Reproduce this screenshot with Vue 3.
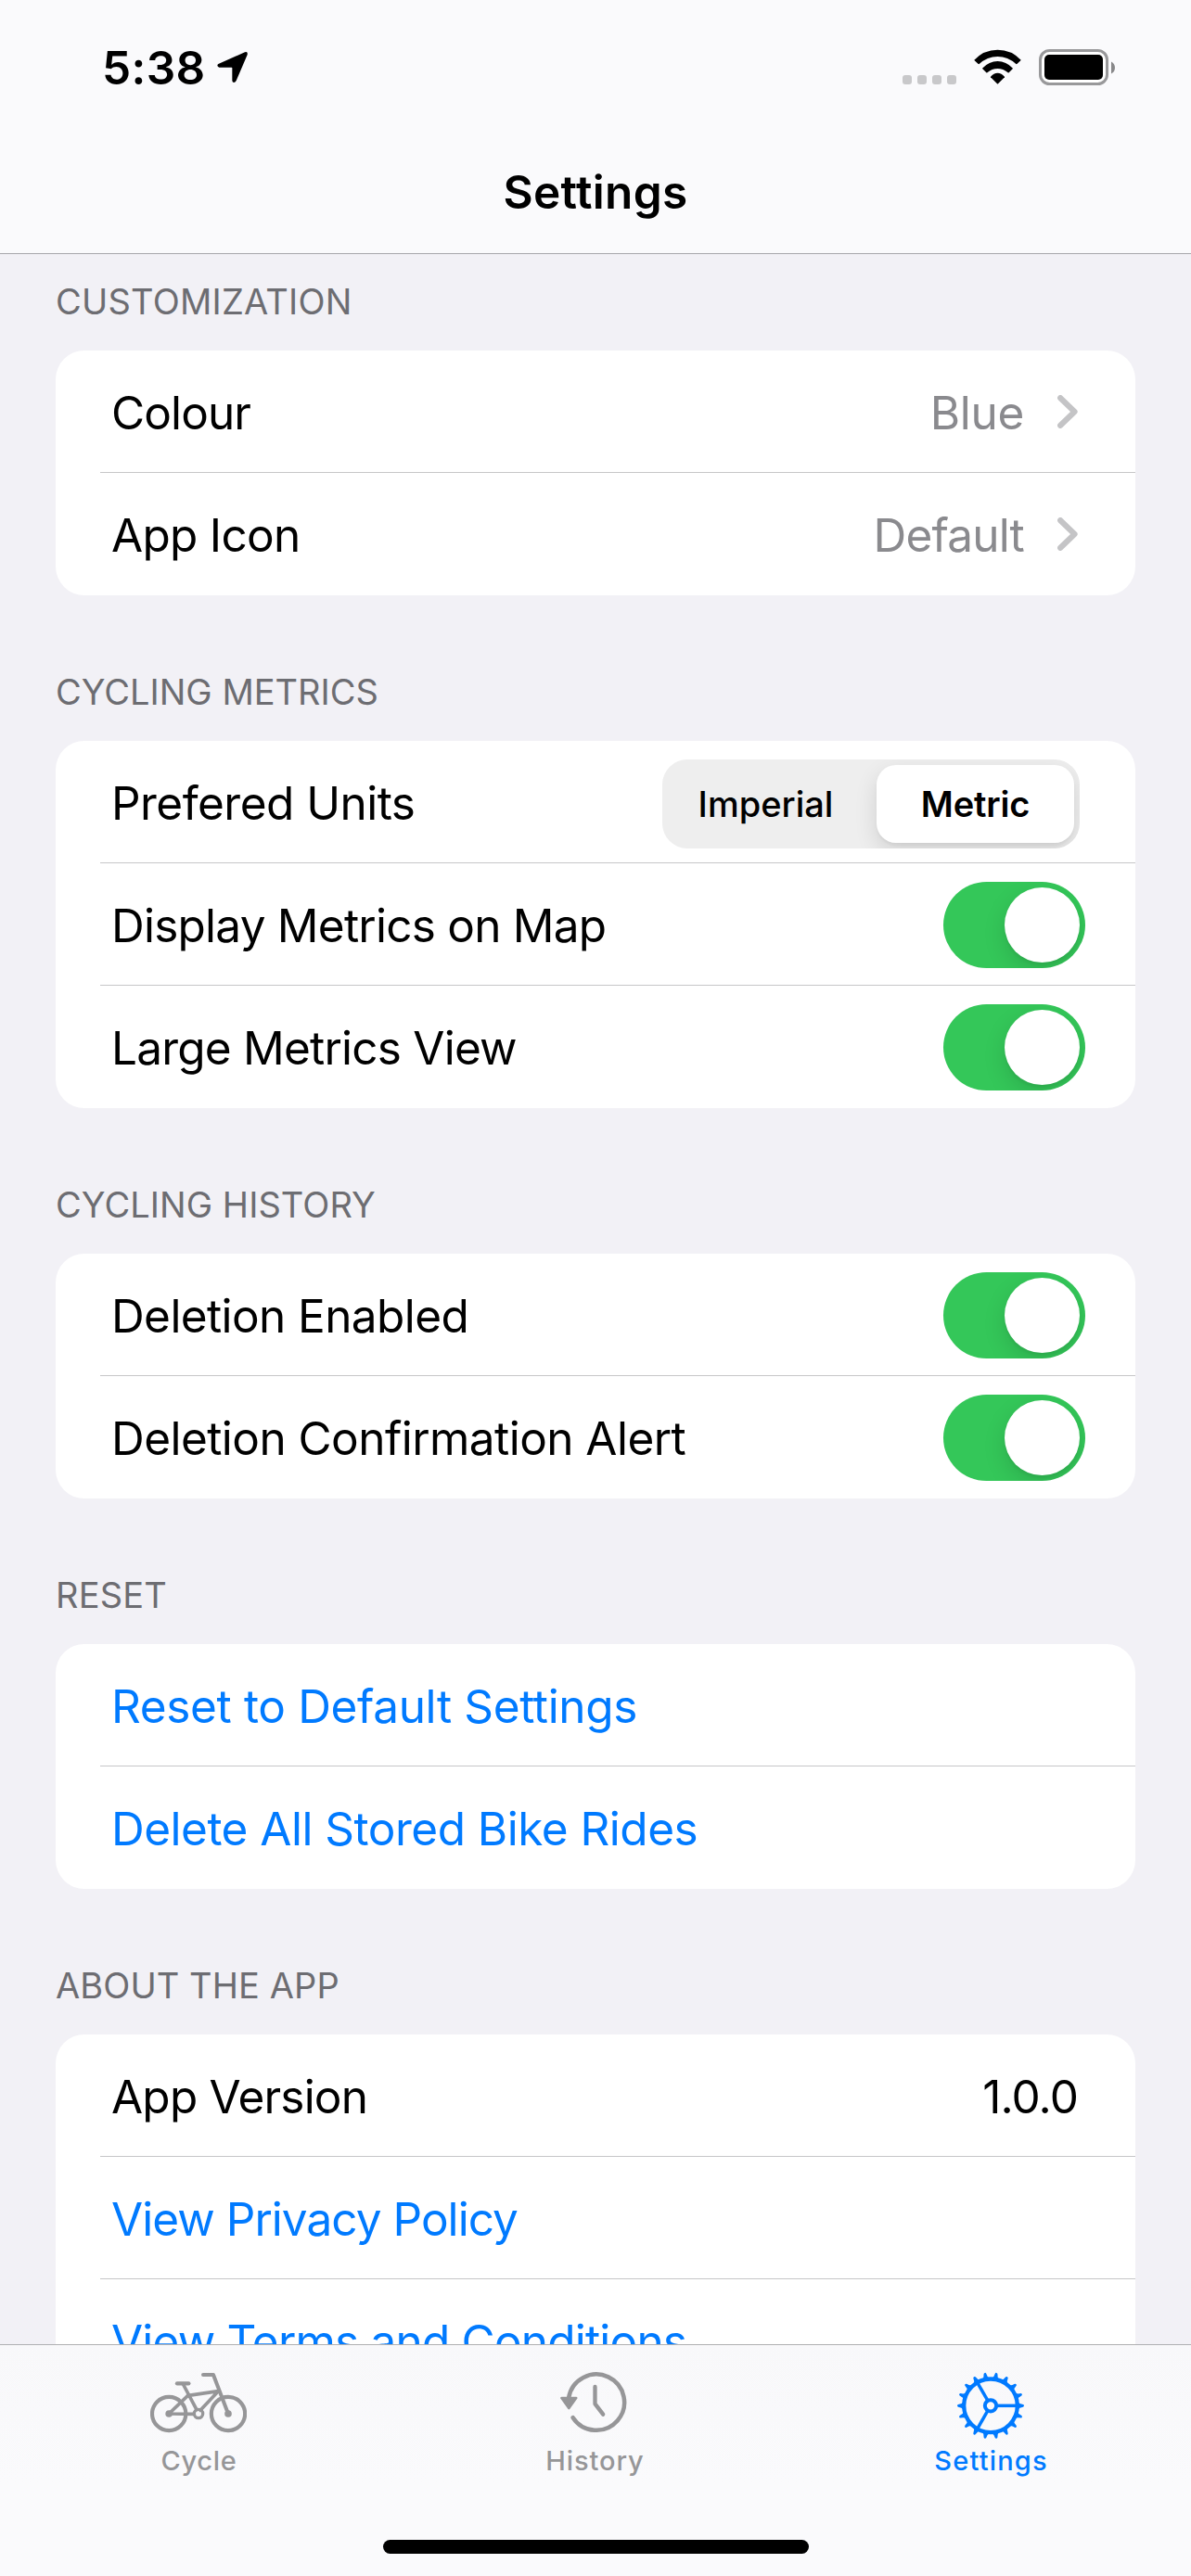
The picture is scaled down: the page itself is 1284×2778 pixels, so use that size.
<script setup>
import { ref } from 'vue'

const units = ref('Metric')

// `track` is the letter spacing of each string, in pixels
const sections = [
  {
    title: 'CUSTOMIZATION',
    track: 0.22,
    rows: [
      { label: 'Colour', track: -0.9, kind: 'nav', value: 'Blue', valueTrack: -0.3 },
      { label: 'App Icon', track: -0.71, kind: 'nav', value: 'Default', valueTrack: -0.8 },
    ],
  },
  {
    title: 'CYCLING METRICS',
    track: 0,
    rows: [
      { label: 'Prefered Units', track: -0.53, kind: 'units' },
      { label: 'Display Metrics on Map', track: -0.76, kind: 'toggle' },
      { label: 'Large Metrics View', track: -0.78, kind: 'toggle' },
    ],
  },
  {
    title: 'CYCLING HISTORY',
    track: 0.06,
    rows: [
      { label: 'Deletion Enabled', track: -0.6, kind: 'toggle' },
      { label: 'Deletion Confirmation Alert', track: -0.55, kind: 'toggle' },
    ],
  },
  {
    title: 'RESET',
    track: 0.17,
    rows: [
      { label: 'Reset to Default Settings', track: -0.36, kind: 'link' },
      { label: 'Delete All Stored Bike Rides', track: -0.51, kind: 'link' },
    ],
  },
  {
    title: 'ABOUT THE APP',
    track: 0.08,
    rows: [
      { label: 'App Version', track: -0.79, kind: 'text', value: '1.0.0', valueTrack: -0.9 },
      { label: 'View Privacy Policy', track: -0.96, kind: 'link' },
      { label: 'View Terms and Conditions', track: -0.8, kind: 'link' },
    ],
  },
]

const teeth = Array.from({ length: 18 }, (_, i) => i * 20)
const spokes = [0, 120, 240]
const px = (n) => ({ letterSpacing: `${n}px` })
</script>

<template>
  <div class="screen">
    <header class="top">
      <div class="status">
        <span class="time">5:38</span>
        <svg class="location" viewBox="700 166 99 102" width="33" height="34">
          <path d="M704 208 L790 170 Q800 166 798 178 L762 262 Q759 268 754 268 Q749 267 749 261 V221 Q749 219 747 219 H707 Q701 218 701 212 Q701 210 704 208Z" />
        </svg>
        <span class="spacer"></span>
        <span class="dots"><i></i><i></i><i></i><i></i></span>
        <svg class="wifi" viewBox="450 160 153 114" width="51" height="38">
          <path d="M451 195 Q482 162 526.500 162 Q571 162 602 195 Q602 196 601 197 L589 208 Q588 209 586 208 Q560 184 526.500 184 Q493 184 467 208 Q465 209 464 208 L452 197 Q451 196 451 195Z" />
          <path d="M477 222 Q499 199 526.500 199 Q554 199 576 222 L575 224 L563 236 Q561 237 560 236 Q545 223 526.500 223 Q508 223 493 236 Q492 237 490 236 L478 224Z" />
          <path d="M504 249 Q514 237 526.500 237 Q539 237 549 249 V251 L528 272 Q526.500 273 525 272 L504 251Z" />
        </svg>
        <svg class="battery" viewBox="0 0 82 39" width="82" height="39">
          <rect x="1.500" y="1.500" width="72" height="36" rx="10" fill="#fff" stroke="#98989a" stroke-width="3" />
          <rect x="6" y="6" width="63" height="27" rx="5" />
          <path d="M78 13.500 Q82 15.500 82 20 Q82 24.500 78 26.500Z" fill="#88888a" />
        </svg>
      </div>
      <h1 class="title">Settings</h1>
    </header>

    <main class="list">
      <section v-for="section in sections" :key="section.title" class="section">
        <h2 class="heading" :style="px(section.track)">{{ section.title }}</h2>
        <div class="card">
          <div v-for="row in section.rows" :key="row.label" class="row" :class="row.kind">
            <span class="label" :style="px(row.track)">{{ row.label }}</span>
            <span v-if="row.value" class="value" :style="px(row.valueTrack)">{{ row.value }}</span>
            <svg v-if="row.kind === 'nav'" class="chevron" viewBox="0 0 22 36" width="22" height="36">
              <path d="M3.200 3.200 L18.500 18 L3.200 32.800" />
            </svg>
            <div v-if="row.kind === 'units'" class="segments">
              <span
                v-for="unit in ['Imperial', 'Metric']"
                :key="unit"
                class="segment"
                :class="{ active: unit === units }"
                @click="units = unit"
              >{{ unit }}</span>
            </div>
            <span v-if="row.kind === 'toggle'" class="switch"><i class="knob"></i></span>
          </div>
        </div>
      </section>
    </main>

    <footer class="tabbar">
      <nav class="tabs">
        <a class="tab">
          <svg viewBox="486 231 312 222" width="104" height="74" fill="none" stroke="currentColor" stroke-linecap="round" stroke-linejoin="round">
            <g stroke-width="12.500">
              <circle cx="546.500" cy="369" r="54.500" />
              <circle cx="738" cy="369" r="54.500" />
            </g>
            <circle cx="642" cy="369" r="14" stroke-width="10" />
            <g stroke-width="11">
              <path d="M573 271 H610" stroke-width="13" />
              <path d="M592 273 L636 356" />
              <path d="M657 243 H690 L738 369" stroke-width="12" />
              <path d="M609 310 L706 296 L648 358" />
              <path d="M607 311 L546.500 369 L628 370" />
            </g>
            <g fill="currentColor" stroke="none">
              <circle cx="546.500" cy="369" r="11.500" />
              <circle cx="738" cy="369" r="11.500" />
            </g>
          </svg>
          <span class="cycle">Cycle</span>
        </a>
        <a class="tab">
          <svg viewBox="523.500 231 222 222" width="74" height="74" fill="none" stroke="currentColor" stroke-linecap="round" stroke-linejoin="round">
            <path d="M551 317 A90.500 90.500 0 1 1 564.500 381.500" stroke-width="13.500" />
            <path d="M636 282 V337 L662 371" stroke-width="13" />
            <path d="M528 318 H575 L551.500 351Z" fill="currentColor" stroke-width="8" />
          </svg>
          <span class="history">History</span>
        </a>
        <a class="tab selected">
          <svg viewBox="513 231 222 222" width="74" height="74" fill="none" stroke="currentColor">
            <circle cx="624" cy="343" r="86.500" stroke-width="13" />
            <circle cx="624" cy="343" r="18.500" stroke-width="12" />
            <path v-for="a in spokes" :key="a" d="M646 343 H706" stroke-width="10.500" :transform="`rotate(${a} 624 343)`" />
            <path
              v-for="a in teeth"
              :key="a"
              d="M711 330 Q717 338 729 339 Q732 340 732 343 Q732 346 729 347 Q717 348 711 356Z"
              fill="currentColor"
              stroke="none"
              :transform="`rotate(${a} 624 343)`"
            />
          </svg>
          <span class="settings">Settings</span>
        </a>
      </nav>
      <div class="home"></div>
    </footer>
  </div>
</template>

<style>
body {
  margin: 0;
  background: #f2f1f6;
}
</style>

<style scoped>
.screen {
  display: flex;
  flex-direction: column;
  width: 1284px;
  height: 2778px;
  overflow: hidden;
  background: #f2f1f6;
  color: #000;
  font-family: Inter, "Liberation Sans", sans-serif;
  font-size: 49.5px;
}
.top {
  flex: none;
  box-sizing: border-box;
  height: 274px;
  border-bottom: 1px solid #a7a7ab;
  background: #fafafc;
}
.status {
  display: flex;
  align-items: flex-start;
  height: 146px;
  padding: 0 82px 0 110px;
  box-sizing: border-box;
}
.time {
  margin-top: 43px;
  line-height: 60px;
  font-weight: 600;
  letter-spacing: 0.4px;
}
.location {
  margin: 55px 0 0 12px;
}
.spacer {
  flex: 1;
}
.dots {
  display: flex;
  gap: 6px;
  margin: 81px 19px 0 0;
}
.dots i {
  width: 10px;
  height: 10px;
  border-radius: 3px;
  background: #c8c8ca;
}
.wifi {
  margin: 53px 19px 0 0;
}
.battery {
  margin-top: 53px;
}
.title {
  margin: 31px 0 0;
  line-height: 60px;
  font-size: 49.5px;
  font-weight: 600;
  letter-spacing: 0.36px;
  text-align: center;
}
.list {
  flex: 1;
  min-height: 0;
  overflow: hidden;
  padding: 27px 60px 0;
}
.section + .section {
  margin-top: 80px;
}
.heading {
  margin: 0 0 29px;
  line-height: 48px;
  font-size: 38px;
  font-weight: 400;
  color: #6d6d72;
}
.card {
  overflow: hidden;
  border-radius: 31px;
  background: #fff;
}
.row {
  display: flex;
  align-items: center;
  box-sizing: border-box;
  height: 132px;
  margin-left: 48px;
  padding: 3px 60px 0 12px;
  border-bottom: 1px solid #c6c6c8;
}
.row:last-child {
  border-color: transparent;
}
.label {
  flex: 1;
  line-height: 60px;
  white-space: nowrap;
}
.value {
  line-height: 60px;
}
.text .value {
  margin-right: 2px;
}
.link .label {
  color: #007aff;
}
.nav .value {
  margin-right: 36px;
  color: #8a8a8e;
}
.row.nav {
  padding-right: 62px;
}
.chevron {
  margin-bottom: 2px;
  fill: none;
  stroke: #c4c4c6;
  stroke-width: 6.2;
  stroke-linecap: round;
  stroke-linejoin: round;
}
.segments {
  display: flex;
  gap: 6px;
  box-sizing: border-box;
  width: 450px;
  height: 96px;
  margin-top: 2px;
  padding: 6px;
  overflow: hidden;
  border-radius: 27px;
  background: #eee;
}
.segment {
  flex: 1;
  padding-right: 8px;
  line-height: 85px;
  font-size: 38px;
  font-weight: 460;
  text-align: center;
}
.segment.active {
  flex: none;
  width: 213px;
  height: 84px;
  padding: 0;
  border-radius: 21px;
  background: #fff;
  font-weight: 580;
  letter-spacing: -0.2px;
  box-shadow: 0 9px 24px rgba(0, 0, 0, 0.12), 0 3px 3px rgba(0, 0, 0, 0.04);
}
.row.toggle {
  padding-right: 54px;
}
.switch {
  display: flex;
  justify-content: flex-end;
  box-sizing: border-box;
  width: 153px;
  height: 93px;
  margin-bottom: 1px;
  padding: 6px;
  overflow: hidden;
  border-radius: 47px;
  background: #34c759;
}
.knob {
  width: 81px;
  height: 81px;
  border-radius: 50%;
  background: #fff;
  box-shadow: 0 9px 24px rgba(0, 0, 0, 0.13), 0 3px 3px rgba(0, 0, 0, 0.05);
}
.tabbar {
  flex: none;
  box-sizing: border-box;
  height: 250px;
  border-top: 1px solid #b0b0b2;
  background: linear-gradient(#f8f8fa, #fafafc 60%);
}
.tabs {
  display: flex;
  padding: 28px 2px 0 1px;
}
.tab {
  display: flex;
  flex: 1;
  flex-direction: column;
  align-items: center;
  gap: 5px;
  color: #969698;
  font-size: 29px;
  font-weight: 480;
  line-height: 36px;
}
.tab svg {
  margin-right: 2px;
}
.cycle {
  letter-spacing: 0.7px;
}
.history {
  letter-spacing: 0.9px;
}
.settings {
  letter-spacing: 1.17px;
}
.selected {
  color: #007aff;
}
.home {
  width: 459px;
  height: 15px;
  margin: 67px 0 0 413px;
  border-radius: 8px;
  background: #000;
}
</style>
